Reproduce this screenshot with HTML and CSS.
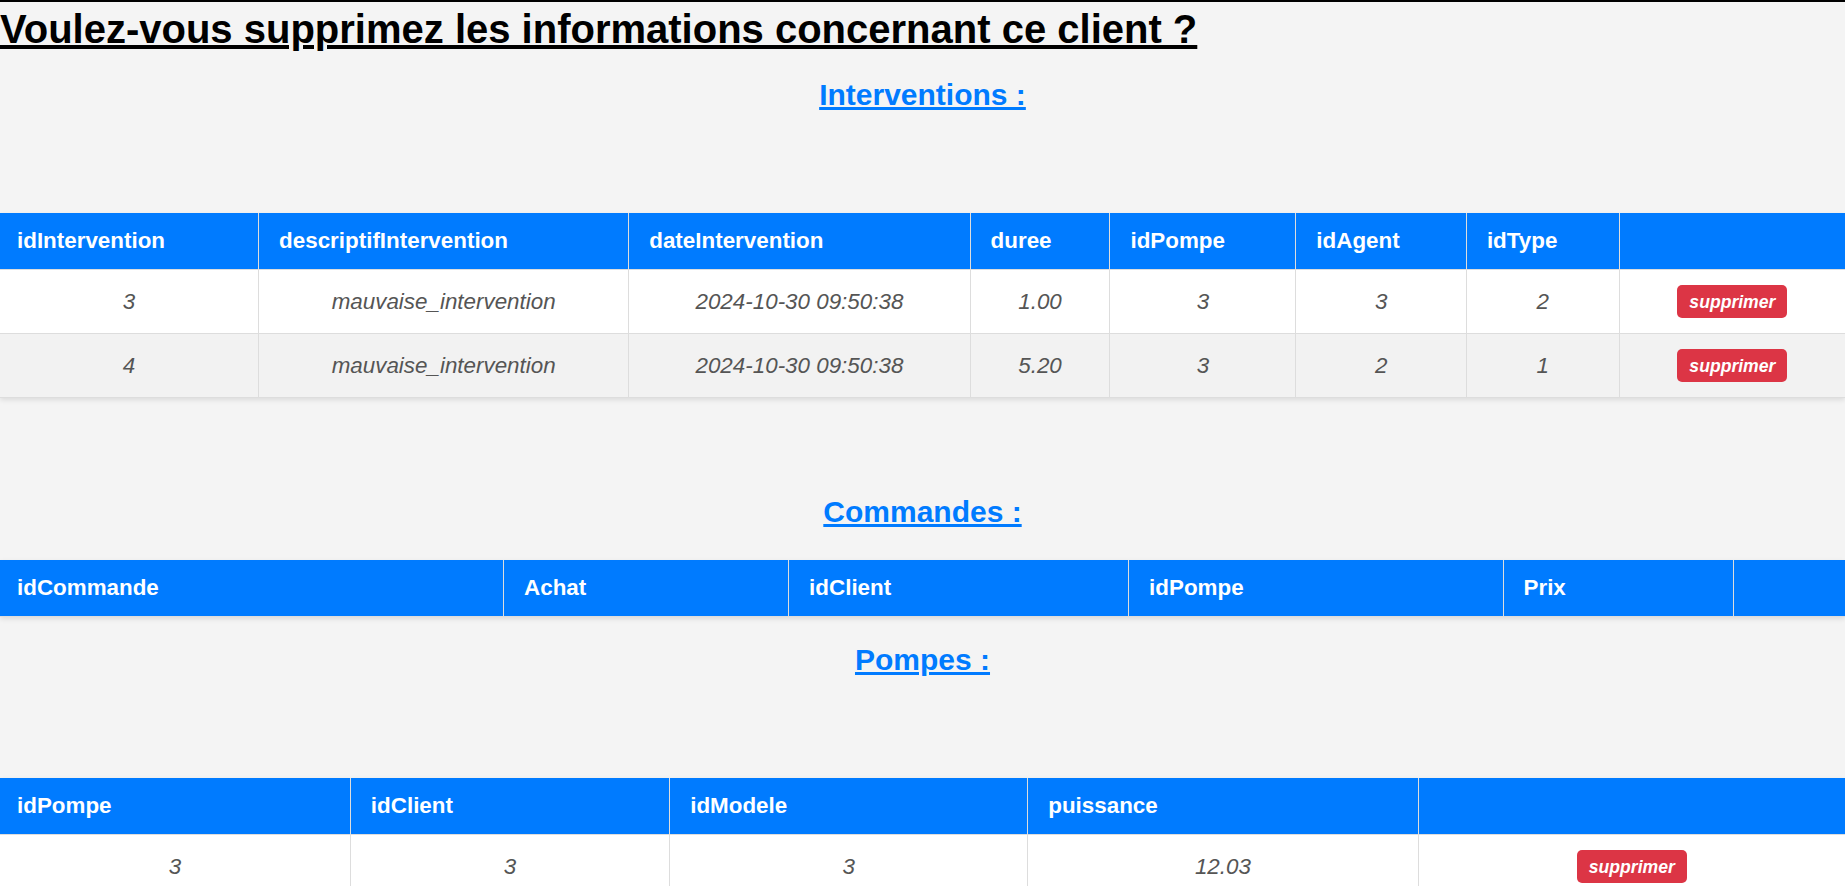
FILE: index.html
```html
<!DOCTYPE html>
<html lang="fr">
<head>
<meta charset="utf-8">
<title>Supprimer client</title>
<link rel="stylesheet" href="styles.css">
</head>
<body>
<div class="page">
  <h1 class="title">Voulez-vous supprimez les informations concernant ce client ?</h1>

  <section class="section section--interventions">
    <h2 class="section-title section-title--loose">Interventions :</h2>
    <table class="data-table">
      <thead>
        <tr>
          <th>idIntervention</th>
          <th>descriptifIntervention</th>
          <th>dateIntervention</th>
          <th>duree</th>
          <th>idPompe</th>
          <th>idAgent</th>
          <th>idType</th>
          <th></th>
        </tr>
      </thead>
      <tbody>
        <tr>
          <td>3</td>
          <td>mauvaise_intervention</td>
          <td>2024-10-30 09:50:38</td>
          <td>1.00</td>
          <td>3</td>
          <td>3</td>
          <td>2</td>
          <td><button class="btn-delete">supprimer</button></td>
        </tr>
        <tr>
          <td>4</td>
          <td>mauvaise_intervention</td>
          <td>2024-10-30 09:50:38</td>
          <td>5.20</td>
          <td>3</td>
          <td>2</td>
          <td>1</td>
          <td><button class="btn-delete">supprimer</button></td>
        </tr>
      </tbody>
    </table>
  </section>

  <section class="section section--commandes">
    <h2 class="section-title">Commandes :</h2>
    <table class="data-table">
      <thead>
        <tr>
          <th>idCommande</th>
          <th>Achat</th>
          <th>idClient</th>
          <th>idPompe</th>
          <th>Prix</th>
          <th></th>
        </tr>
      </thead>
      <tbody></tbody>
    </table>
  </section>

  <section class="section section--pompes">
    <h2 class="section-title section-title--loose">Pompes :</h2>
    <table class="data-table">
      <thead>
        <tr>
          <th>idPompe</th>
          <th>idClient</th>
          <th>idModele</th>
          <th>puissance</th>
          <th></th>
        </tr>
      </thead>
      <tbody>
        <tr>
          <td>3</td>
          <td>3</td>
          <td>3</td>
          <td>12.03</td>
          <td><button class="btn-delete">supprimer</button></td>
        </tr>
      </tbody>
    </table>
  </section>
</div>
</body>
</html>
```
FILE: styles.css
```css
html, body {
  margin: 0;
  padding: 0;
}

body {
  background: #f4f4f4;
  font-family: "Liberation Sans", Arial, sans-serif;
  color: #000;
}

.page {
  border-top: 2px solid #000;
}

.title {
  margin: 0;
  padding-top: 4px;
  font-size: 40px;
  line-height: 46px;
  font-weight: bold;
  text-decoration: underline;
  text-align: left;
}

.section-title {
  margin: 0 0 31px;
  font-size: 30px;
  line-height: 35px;
  font-weight: bold;
  color: #007bff;
  text-decoration: underline;
  text-align: center;
}

.section-title--loose {
  margin-bottom: 101px;
}

.section--interventions {
  margin-top: 25px;
  margin-bottom: 96px;
}

.section--commandes {
  margin-bottom: 25px;
}

.data-table {
  width: 100%;
  border-collapse: collapse;
  box-shadow: 0 2px 5px rgba(0, 0, 0, 0.1);
  font-size: 22.4px;
}

.data-table th {
  background: #007bff;
  color: #fff;
  font-weight: bold;
  text-align: left;
  padding: 15px 20px;
  border: 1px solid #ddd;
  border-top: none;
}

.data-table td {
  background: #fff;
  color: #555;
  font-style: italic;
  text-align: center;
  padding: 15px 20px;
  border: 1px solid #ddd;
}

.data-table th:first-child {
  padding-left: 17px;
  padding-right: 23px;
}

.data-table th:first-child,
.data-table td:first-child {
  border-left: none;
}

.data-table th:last-child,
.data-table td:last-child {
  border-right: none;
}

.data-table tbody tr:nth-child(even) td {
  background: #f2f2f2;
}

.btn-delete {
  display: inline-block;
  margin: 0 7px;
  background: #dc3545;
  color: #fff;
  border: none;
  border-radius: 5px;
  padding: 6.5px 12px;
  font-family: "Liberation Sans", Arial, sans-serif;
  font-size: 17.6px;
  line-height: 20px;
  font-weight: bold;
  font-style: italic;
  cursor: pointer;
}
```
